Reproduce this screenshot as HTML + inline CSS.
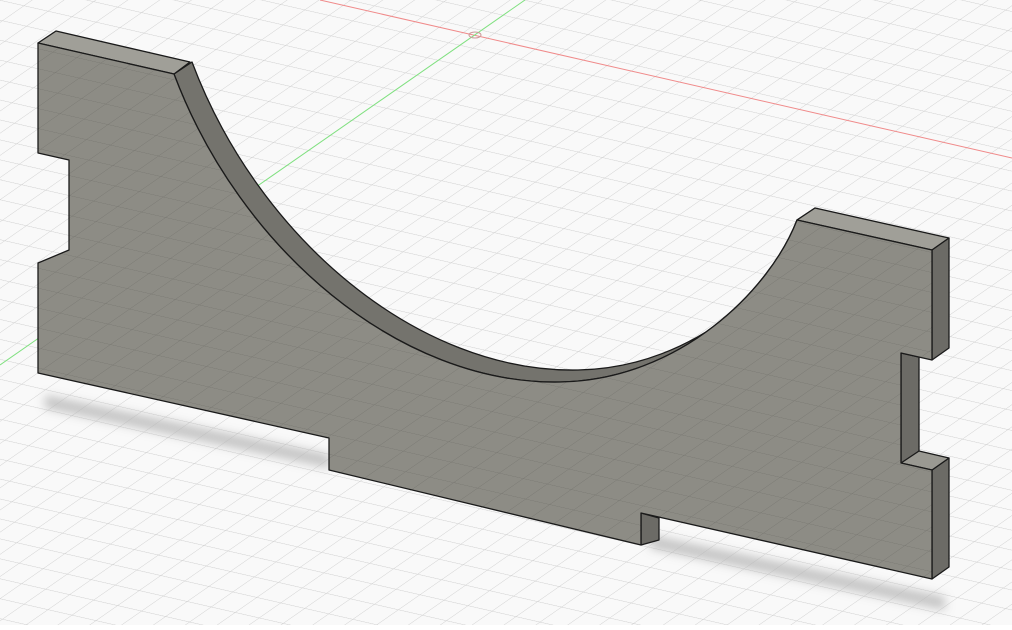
<!DOCTYPE html>
<html><head><style>html,body{margin:0;padding:0;background:#fff;overflow:hidden}</style></head>
<body>
<svg width="1012" height="625" viewBox="0 0 1012 625" xmlns="http://www.w3.org/2000/svg">
<defs>
<filter id="b" x="-20%" y="-200%" width="140%" height="500%"><feGaussianBlur stdDeviation="5"/></filter>
<pattern id="g" width="24" height="24" patternUnits="userSpaceOnUse" patternTransform="matrix(1 0.228 -0.9 0.626 0 0)">
<path d="M0,0 H24 M0,0 V24" stroke="#cdcdcd" stroke-width="1.1" fill="none"/>
</pattern>
<pattern id="g2" width="24" height="24" patternUnits="userSpaceOnUse" patternTransform="matrix(1 0.228 -0.9 0.626 0 0)">
<path d="M0,0 H24 M0,0 V24" stroke="#000" stroke-opacity="0.15" stroke-width="1" fill="none"/>
</pattern>
</defs>
<rect width="1012" height="625" fill="#f9f9f9"/>
<rect width="1012" height="625" fill="url(#g)"/>
<g fill="#b5b5b5" filter="url(#b)" opacity="0.8">
<polygon points="45,395 330,455 330,468 45,408"/>
<polygon points="650,535 945,597 945,610 650,548"/>
</g>
<line x1="320" y1="0" x2="1012" y2="158" stroke="#f08a8a" stroke-width="1"/>
<line x1="0" y1="365" x2="525" y2="0" stroke="#7fe07f" stroke-width="1"/>
<ellipse cx="475" cy="35" rx="6" ry="3" fill="none" stroke="#c99" stroke-width="1"/>
<g stroke="#1a1a1a" stroke-width="1.3" stroke-linejoin="round">
<path d="M174,74 C240,250 400,385 560,382 C680,380 770,290 797,220 L815,208 C788,278 698,368 578,370 C418,373 258,238 192,62 Z" fill="#74736d"/>
<path d="M38,43 L56,31 L190,62 L174,74 Z" fill="#a09f98"/>
<path d="M797,220 L815,208 L949,238 L932,250 Z" fill="#a09f98"/>
<path d="M932,250 L949,238 L949,348 L932,360 Z" fill="#6c6b66"/>
<path d="M932,470 L949,458 L949,567 L932,579 Z" fill="#6c6b66"/>
<path d="M901,353 L919,357 L919,456 L901,463 Z" fill="#6c6b66"/>
<path d="M901,463 L919,451 L949,458 L932,470 Z" fill="#9a9992"/>
<path d="M641,513 L659,518 L659,540 L641,545 Z" fill="#6c6b66"/>
<path d="M38,43 L174,74 C240,250 400,385 560,382 C680,380 770,290 797,220 L932,250 L932,360 L901,353 L901,463 L932,470 L932,579 L641,513 L641,545 L329,470 L329,438 L38,373 L38,263 L69,250 L69,160 L38,153 Z" fill="#8d8c85"/>
<path d="M38,43 L174,74 C240,250 400,385 560,382 C680,380 770,290 797,220 L932,250 L932,360 L901,353 L901,463 L932,470 L932,579 L641,513 L641,545 L329,470 L329,438 L38,373 L38,263 L69,250 L69,160 L38,153 Z" fill="url(#g2)" stroke="none"/>
</g>
</svg>
</body></html>
